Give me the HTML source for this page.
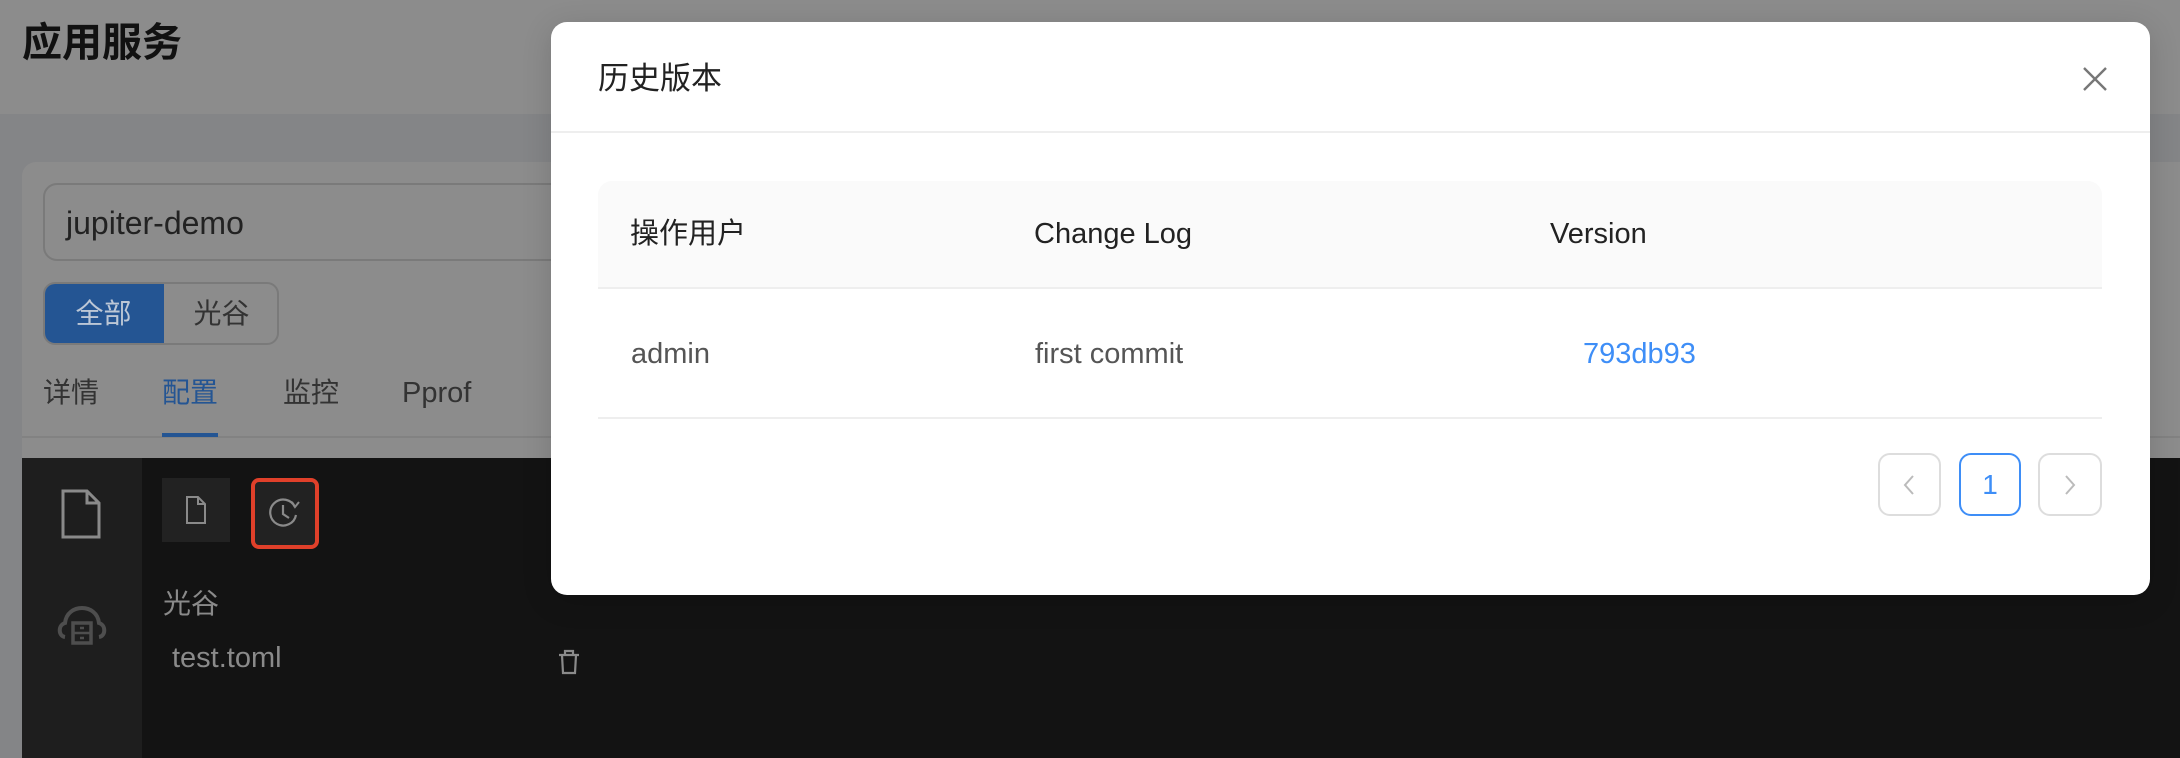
<!DOCTYPE html>
<html><head><meta charset="utf-8">
<style>
*{box-sizing:border-box;margin:0;padding:0}
body{width:2180px;height:758px;overflow:hidden;position:relative;background:#848587;font-family:"Liberation Sans","Noto Sans CJK SC",sans-serif}
.abs{position:absolute}
</style></head><body>
<div class="abs" style="left:0;top:0;width:2180px;height:114px;background:#8c8c8c"></div>
<div class="abs" style="left:22px;top:19px;font-size:40px;font-weight:bold;color:#111;line-height:48px">应用服务</div>
<div class="abs" style="left:22px;top:162px;width:2158px;height:296px;background:#8c8c8c;border-radius:14px 0 0 0"></div>
<div class="abs" style="left:43px;top:183px;width:1000px;height:78px;border:2px solid #7a7a7a;border-radius:14px;font-size:32px;color:#222;padding-left:21px;line-height:76px">jupiter-demo</div>
<div class="abs" style="left:43px;top:282px;width:236px;height:63px;border:2px solid #7a7a7a;border-radius:12px;overflow:hidden">
 <div class="abs" style="left:-2px;top:-2px;width:121px;height:63px;background:#245593;color:#bcc7d6;font-size:28px;line-height:63px;text-align:center">全部</div>
 <div class="abs" style="left:119px;top:0;width:115px;height:59px;color:#333;font-size:28px;line-height:59px;text-align:center">光谷</div>
</div>
<div class="abs" style="left:43px;top:374px;font-size:28px;color:#333;line-height:38px">详情</div>
<div class="abs" style="left:162px;top:374px;font-size:28px;color:#245593;line-height:38px">配置</div>
<div class="abs" style="left:283px;top:374px;font-size:28px;color:#333;line-height:38px">监控</div>
<div class="abs" style="left:402px;top:374px;font-size:29px;color:#333;line-height:38px">Pprof</div>
<div class="abs" style="left:22px;top:436px;width:2158px;height:2px;background:#828282"></div>
<div class="abs" style="left:162px;top:433px;width:56px;height:4px;background:#245593"></div>
<div class="abs" style="left:22px;top:458px;width:2158px;height:300px;background:#131313"></div>
<div class="abs" style="left:22px;top:458px;width:120px;height:300px;background:#1e1e1e"></div>
<svg class="abs" style="left:60px;top:488px" width="42" height="52" viewBox="0 0 42 52"><path d="M3 3H27L39 15V49H3Z M27 3V15H39" fill="none" stroke="#8a8a8a" stroke-width="3"/></svg>
<svg class="abs" style="left:56px;top:605px" width="52" height="42" viewBox="0 0 52 42"><path d="M9 32C2 31 2 20 9 18C10 8 18 3 26 3C34 3 42 8 43 18C50 20 50 31 43 32" fill="none" stroke="#4e4e4e" stroke-width="4"/><rect x="17" y="18" width="18" height="20" fill="none" stroke="#4e4e4e" stroke-width="3.5"/><path d="M17 28H35M24 23H28M24 33H28" stroke="#4e4e4e" stroke-width="2.5"/></svg>
<div class="abs" style="left:162px;top:478px;width:68px;height:64px;background:#222"></div>
<svg class="abs" style="left:185px;top:495px" width="22" height="30" viewBox="0 0 22 30"><path d="M2 2H13L20 9V28H2Z M13 2V9H20" fill="none" stroke="#8a8a8a" stroke-width="2"/></svg>
<div class="abs" style="left:251px;top:478px;width:68px;height:71px;background:#222;border:4px solid #e0402a;border-radius:8px"></div>
<svg class="abs" style="left:268px;top:495px" width="34" height="34" viewBox="0 0 34 34"><path d="M27 12A13 13 0 1 0 28 20" fill="none" stroke="#8a8a8a" stroke-width="2.2"/><path d="M24 7L27 12L31 7" fill="none" stroke="#8a8a8a" stroke-width="2"/><path d="M15 10V19L21 23" fill="none" stroke="#8a8a8a" stroke-width="2.2"/></svg>
<div class="abs" style="left:163px;top:587px;font-size:28px;color:#8a8a8a;line-height:34px">光谷</div>
<div class="abs" style="left:172px;top:641px;font-size:29px;color:#8a8a8a;line-height:34px">test.toml</div>
<svg class="abs" style="left:557px;top:649px" width="24" height="26" viewBox="0 0 24 26"><path d="M2 6H22M8 6V2H16V6M5 6L6 24H18L19 6" fill="none" stroke="#8a8a8a" stroke-width="2.2"/></svg>

<div class="abs" style="left:551px;top:22px;width:1599px;height:573px;background:#fff;border-radius:16px;box-shadow:0 6px 30px rgba(0,0,0,.15)">
 <div class="abs" style="left:47px;top:37px;font-size:31px;color:#222;line-height:40px">历史版本</div>
 <svg class="abs" style="left:1531px;top:44px" width="26" height="26" viewBox="0 0 26 26"><path d="M2 2L24 24M24 2L2 24" stroke="#777" stroke-width="2.4"/></svg>
 <div class="abs" style="left:0;top:109px;width:1599px;height:2px;background:#eee"></div>
 <div class="abs" style="left:47px;top:159px;width:1504px;height:108px;background:#fafafa;border-radius:14px 14px 0 0;border-bottom:2px solid #eee"></div>
 <div class="abs" style="left:79px;top:194px;font-size:29px;color:#222;line-height:36px">操作用户</div>
 <div class="abs" style="left:483px;top:194px;font-size:29px;color:#222;line-height:36px">Change Log</div>
 <div class="abs" style="left:999px;top:194px;font-size:29px;color:#222;line-height:36px">Version</div>
 <div class="abs" style="left:80px;top:314px;font-size:29px;color:#555;line-height:36px">admin</div>
 <div class="abs" style="left:484px;top:314px;font-size:29px;color:#555;line-height:36px">first commit</div>
 <div class="abs" style="left:1032px;top:314px;font-size:29px;color:#3e8ef7;line-height:36px">793db93</div>
 <div class="abs" style="left:47px;top:395px;width:1504px;height:2px;background:#eee"></div>
 <div class="abs" style="left:1327px;top:431px;width:63px;height:63px;border:2px solid #ddd;border-radius:12px"></div>
 <svg class="abs" style="left:1350px;top:452px" width="16" height="22" viewBox="0 0 16 22"><path d="M12 2L4 11L12 20" fill="none" stroke="#bbb" stroke-width="2"/></svg>
 <div class="abs" style="left:1408px;top:431px;width:62px;height:63px;border:2px solid #3e8ef7;border-radius:12px;color:#3e8ef7;font-size:28px;line-height:59px;text-align:center">1</div>
 <div class="abs" style="left:1487px;top:431px;width:64px;height:63px;border:2px solid #ddd;border-radius:12px"></div>
 <svg class="abs" style="left:1511px;top:452px" width="16" height="22" viewBox="0 0 16 22"><path d="M4 2L12 11L4 20" fill="none" stroke="#bbb" stroke-width="2"/></svg>
</div>
</body></html>
